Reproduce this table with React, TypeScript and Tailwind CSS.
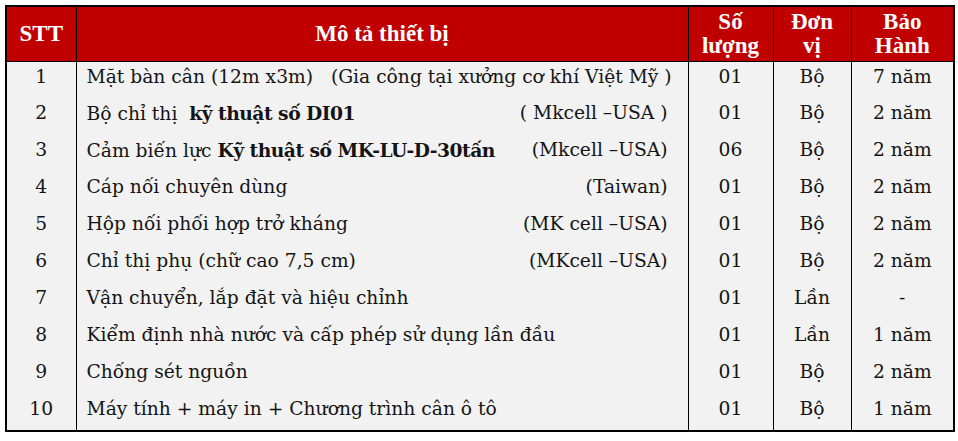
const rows = [
  { stt: '1', left: <>Mặt bàn cân (12m x3m)&nbsp;&nbsp;&nbsp;(Gia công tại xưởng cơ khí Việt Mỹ )</>, right: null, sl: '01', dv: 'Bộ', bh: '7 năm' },
  { stt: '2', left: <>Bộ chỉ thị&nbsp; <b className="tracking-[-0.5px]">kỹ thuật số DI01</b></>, right: '( Mkcell –USA )', sl: '01', dv: 'Bộ', bh: '2 năm' },
  { stt: '3', left: <>Cảm biến lực <b className="tracking-[-0.5px]">Kỹ thuật số MK-LU-D-30tấn</b></>, right: '(Mkcell –USA)', sl: '06', dv: 'Bộ', bh: '2 năm' },
  { stt: '4', left: <>Cáp nối chuyên dùng</>, right: '(Taiwan)', sl: '01', dv: 'Bộ', bh: '2 năm' },
  { stt: '5', left: <>Hộp nối phối hợp trở kháng</>, right: '(MK cell –USA)', sl: '01', dv: 'Bộ', bh: '2 năm' },
  { stt: '6', left: <>Chỉ thị phụ (chữ cao 7,5 cm)</>, right: '(MKcell –USA)', sl: '01', dv: 'Bộ', bh: '2 năm' },
  { stt: '7', left: <>Vận chuyển, lắp đặt và hiệu chỉnh</>, right: null, sl: '01', dv: 'Lần', bh: '-' },
  { stt: '8', left: <>Kiểm định nhà nước và cấp phép sử dụng lần đầu</>, right: null, sl: '01', dv: 'Lần', bh: '1 năm' },
  { stt: '9', left: <>Chống sét nguồn</>, right: null, sl: '01', dv: 'Bộ', bh: '2 năm' },
  { stt: '10', left: <>Máy tính + máy in + Chương trình cân ô tô</>, right: null, sl: '01', dv: 'Bộ', bh: '1 năm' },
];

export default function App() {
  return (
    <div className="w-[958px] h-[441px] bg-white pt-[5px] pl-[5px]">
      <table className="border-collapse border-2 border-black table-fixed w-[948px]">
        <colgroup>
          <col className="w-[70px]" />
          <col className="w-[612px]" />
          <col className="w-[85px]" />
          <col className="w-[78px]" />
          <col className="w-[103px]" />
        </colgroup>
        <thead>
          <tr className="bg-[#c00000] text-white font-bold text-[23px] leading-[24px] h-[55px] font-['Liberation_Serif',serif]">
            <th className="border border-black font-bold">STT</th>
            <th className="border border-black font-bold">Mô tả thiết bị</th>
            <th className="border border-black font-bold">Số<br />lượng</th>
            <th className="border border-black font-bold">Đơn<br />vị</th>
            <th className="border border-black font-bold">Bảo<br />Hành</th>
          </tr>
        </thead>
        <tbody className="bg-[#f2f2f2] text-[#141414] text-[18.7px] font-['DejaVu_Serif',serif]">
          {rows.map((r) => (
            <tr key={r.stt} className="h-[37px]">
              <td className="border-x border-black text-center pb-[6px]">{r.stt}</td>
              <td className="border-x border-black pl-[10px] pr-[20px] pb-[6px]">
                <div className="flex justify-between whitespace-nowrap">
                  <span>{r.left}</span>
                  {r.right && <span>{r.right}</span>}
                </div>
              </td>
              <td className="border-x border-black text-center pb-[6px]">{r.sl}</td>
              <td className="border-x border-black text-center pb-[6px]">{r.dv}</td>
              <td className="border-x border-black text-center pb-[6px]">{r.bh}</td>
            </tr>
          ))}
        </tbody>
      </table>
    </div>
  );
}
